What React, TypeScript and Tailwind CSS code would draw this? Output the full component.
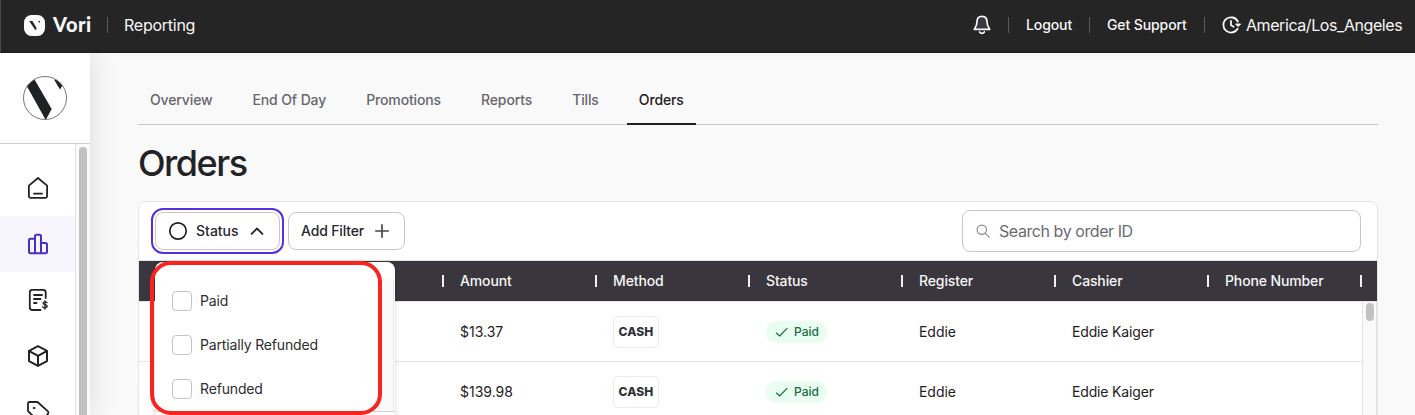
import { ReactNode } from "react";
import { clsx } from "clsx";

const tabs = ["Overview", "End Of Day", "Promotions", "Reports", "Tills", "Orders"];

const columns = ["Order ID", "Date", "Amount", "Method", "Status", "Register", "Cashier", "Phone Number"];

const orders = [
  { id: 1, amount: "$13.37", register: "Eddie", cashier: "Eddie Kaiger" },
  { id: 2, amount: "$139.98", register: "Eddie", cashier: "Eddie Kaiger" },
];

const statuses = ["Paid", "Partially Refunded", "Refunded"];

function Icon({ size = 24, width = 1.8, className, children }: { size?: number; width?: number; className?: string; children: ReactNode }) {
  return (
    <svg
      width={size}
      height={size}
      viewBox="0 0 24 24"
      fill="none"
      stroke="currentColor"
      strokeWidth={width}
      strokeLinecap="round"
      strokeLinejoin="round"
      className={clsx("shrink-0", className)}
    >
      {children}
    </svg>
  );
}

function Divider({ className }: { className?: string }) {
  return <div className={clsx("h-4 w-px shrink-0 bg-[#5a5a5c]", className)} />;
}

function Header() {
  return (
    <header className="relative z-20 flex h-[53px] shrink-0 items-center border-b border-l border-b-[#1b1b1b] border-l-[#4b4b4b] bg-[#252525] pl-[23px] pr-[13px] pb-[2px] text-[#f7f7f7]">
      <svg width="21" height="21" viewBox="0 0 21 21" className="shrink-0">
        <rect width="21" height="21" rx="7.5" fill="#fafafa" />
        <path d="M5.200 6h3.200l4.300 7.200-1.300 2.100z" fill="#252525" />
        <path d="M14 6h2.200l-.6 1.900z" fill="#252525" />
      </svg>
      <span className="ml-2 w-[38px] pb-[2px] font-['Lato'] text-[20px] font-black leading-6 tracking-[0.5px]">Vori</span>
      <Divider className="ml-4" />
      <span className="ml-4 text-[16px] tracking-[-0.25px]">Reporting</span>

      <div className="ml-auto flex items-center">
        <svg width="18" height="20" viewBox="0 0 18 20" fill="none" stroke="currentColor" strokeWidth="1.7" strokeLinecap="round" strokeLinejoin="round" className="mr-[17px]">
          <path d="M9 1.400c-3.200 0-5 2.300-5 5.200 0 4-1.600 5.700-2.700 7.700h15.400C15.600 12.300 14 10.600 14 6.600c0-2.900-1.800-5.200-5-5.200z" fill="#3a3940" />
          <path d="M6.600 17c.6 1 1.400 1.400 2.400 1.400s1.800-.4 2.400-1.400" />
        </svg>
        <Divider />
        <span className="ml-[17px] w-[46px] pb-px text-[14px] font-medium tracking-[-0.1px]">Logout</span>
        <Divider className="ml-[17px]" />
        <span className="ml-[17px] w-[81px] whitespace-nowrap pb-px text-[14px] font-medium tracking-[-0.1px]">Get Support</span>
        <Divider className="ml-[16px]" />
        <svg width="20" height="18" viewBox="0 0 20 18" fill="none" stroke="currentColor" strokeWidth="1.8" strokeLinecap="round" strokeLinejoin="round" className="ml-[17px]">
          <path d="M15.800 5.500A7.600 7.600 0 1 0 15.600 12.700" />
          <path d="M9 5v4.300l2.600 1.500" />
          <path d="M14 8h4.600l-2.300 2.400z" fill="currentColor" strokeWidth="1" />
        </svg>
        <span className="ml-1 w-[156px] whitespace-nowrap text-[16px] tracking-[-0.42px]">America/Los_Angeles</span>
      </div>
    </header>
  );
}

function Sidebar() {
  const item = "flex h-14 w-full shrink-0 items-center justify-center";
  return (
    <aside className="z-10 flex w-[90px] shrink-0 flex-col bg-white shadow-[0_0_26px_rgba(0,0,0,0.13)]">
      <div className="flex h-[91px] shrink-0 items-center justify-center border-b border-[#cfcfcf]">
        <svg width="44" height="44" viewBox="0 0 44 44">
          <clipPath id="avatar">
            <circle cx="22" cy="22" r="21.500" />
          </clipPath>
          <g clipPath="url(#avatar)" fill="#1f2223">
            <path d="M3.500 9.500 11.500 3.500 28.700 33 22.700 44z" />
            <path d="M31 3.500h12l-6 10z" />
          </g>
          <circle cx="22" cy="22" r="21.500" fill="none" stroke="#777" />
        </svg>
      </div>
      <div className="flex min-h-0 flex-1">
        <nav className="flex w-[75px] flex-col overflow-hidden pt-4 text-[#232327]">
          <a className={item}>
            <Icon>
              <path d="M2.900 9.600 12 2l9.100 7.600V20a1.800 1.800 0 0 1-1.800 1.800H4.700A1.800 1.800 0 0 1 2.900 20z" />
              <path d="M8 17.700h8" />
            </Icon>
          </a>
          <a className={clsx(item, "bg-[#f7f6fe] text-[#4a2fc4]")}>
            <Icon width={2}>
              <path d="M9 21.200V4.300a1.500 1.500 0 0 1 1.500-1.500h3a1.500 1.500 0 0 1 1.500 1.500v16.900" />
              <path d="M9 6.700H4.500A1.500 1.500 0 0 0 3 8.200v11.500a1.500 1.500 0 0 0 1.500 1.500h15a1.500 1.500 0 0 0 1.500-1.500v-7.200a1.500 1.500 0 0 0-1.500-1.500H15" />
            </Icon>
          </a>
          <a className={item}>
            <Icon>
              <path d="M14.500 22H6.300a2.500 2.500 0 0 1-2.500-2.500V4.300a2.500 2.500 0 0 1 2.500-2.500h10.900a2.500 2.500 0 0 1 2.500 2.500V10" />
              <path d="M8 7h8M8 11h6.500M8 15h2.500" />
              <path d="M21 14.600c-.8-1.100-4-1-4 .7 0 1.900 4.200 1 4.200 3 0 1.800-3.500 1.900-4.500.5M19 12.700v8.500" strokeWidth="1.300" />
            </Icon>
          </a>
          <a className={item}>
            <Icon width={2}>
              <path d="m12 2.200 9 4.700v10.200l-9 4.700-9-4.700V6.900z" />
              <path d="m3.300 7.200 8.700 4.700 8.700-4.700M12 12v9.500" />
            </Icon>
          </a>
          <a className={item}>
            <Icon>
              <path d="M2 3.500A1.500 1.500 0 0 1 3.500 2h8l10.200 9.200a2 2 0 0 1 .1 2.900l-7 7a2 2 0 0 1-2.900-.1L2 11z" />
              <circle cx="8" cy="8" r=".8" fill="currentColor" strokeWidth="1" />
            </Icon>
          </a>
        </nav>
        <div className="w-[15px] border-l border-[#e3e3e3] bg-[#fafafa] pl-[3px] pt-[3px]">
          <div className="h-80 w-2 rounded-full bg-[#c1c1c1]" />
        </div>
      </div>
    </aside>
  );
}

function StatusMenu() {
  return (
    <div className="absolute left-4 top-[60px] h-[180px] w-[240px] rounded-lg bg-white shadow-[0_1px_5px_rgba(0,0,0,0.18)]">
      <div className="mt-[17px] flex h-[133px] border-b border-[#d6d6d6]">
        <div className="flex flex-1 flex-col gap-6 pl-[17px] pt-3">
          {statuses.map((status) => (
            <label key={status} className="flex h-5 items-center gap-2 text-[14px] tracking-[-0.16px] text-[#2d2d31]">
              <span className="size-5 rounded border border-[#c4c4c7] bg-white" />
              <span className="pb-[2px]">{status}</span>
            </label>
          ))}
        </div>
        <div className="mr-px w-[15px] border-l border-r border-[#e7e7e7] bg-[#fafafa]" />
      </div>
      {/* Highlight around the options */}
      <div className="absolute -left-[5px] -top-px h-[154px] w-[232px] rounded-[21px] border-4 border-[#fb231e]" />
    </div>
  );
}

function Toolbar() {
  const button = "flex h-[38px] items-center rounded-lg border border-[#c8c8cb] bg-white text-[14px] font-medium text-[#28282c]";
  return (
    <div className="flex h-[59px] items-center border-b border-[#e4e4ea] px-4">
      <button className={clsx(button, "w-[125px] pl-3 outline-2 outline-offset-2 outline-[#5430e0]")}>
        <svg width="20" height="20" viewBox="0 0 20 20" className="shrink-0">
          <circle cx="10" cy="10" r="8.200" fill="none" stroke="#1f2023" strokeWidth="1.700" />
        </svg>
        <span className="ml-2 w-[43px] pb-[2px] text-left">Status</span>
        <Icon size={20} width={2.2} className="ml-2">
          <path d="m5.500 15.500 6.500-6.500 6.500 6.500" />
        </Icon>
      </button>
      <button className={clsx(button, "ml-2 w-[117px] pl-3")}>
        <span className="w-[63px] whitespace-nowrap pb-[2px] text-left tracking-[-0.15px]">Add Filter</span>
        <Icon size={20} width={2} className="ml-2 text-[#46454c]">
          <path d="M4.500 12h15M12 4.500v15" />
        </Icon>
      </button>
      <label className="ml-auto flex h-[42px] w-[399px] items-center rounded-lg border border-[#c8c8c8] bg-white pl-[13px] text-[16px] tracking-[-0.43px] text-[#6b6a72]">
        <svg width="14" height="14" viewBox="0 0 15 15" fill="none" stroke="#8b8a92" strokeWidth="1.300" strokeLinecap="round">
          <circle cx="6.200" cy="6.200" r="5" />
          <path d="m10 10 4 4" />
        </svg>
        <span className="ml-[9px]">Search by order ID</span>
      </label>
    </div>
  );
}

function OrdersTable() {
  return (
    <div className="flex flex-col">
      <div className="flex h-10 bg-[#39373d]">
        {columns.map((column, i) => (
          <div
            key={column}
            className={clsx(
              "flex shrink-0 items-center justify-between pl-4 text-[14px] font-medium tracking-[-0.13px] text-[#f6f6f7]",
              i === 0 ? "w-[152px]" : "w-[153px]"
            )}
          >
            <span className="pb-[2px]">{column}</span>
            <span className="h-3 w-[2px] bg-[#f2f2f4]" />
          </div>
        ))}
      </div>
      <div className="flex h-[130px] border-t border-[#e4e4ea]">
        <div className="w-[1223px]">
          {orders.map((order) => (
            <div key={order.id} className="flex h-[60px] items-center border-b border-[#e4e4ea] text-[14px] tracking-[-0.16px] text-[#1f2023]">
              <div className="w-[305px]" />
              <div className="w-[153px] pl-4 tracking-normal">{order.amount}</div>
              <div className="w-[153px] pl-4">
                <div className="flex h-8 w-[46px] items-center justify-center rounded border border-[#ececee] pt-px text-[12px] font-extrabold tracking-[0.1px] text-[#323138]">
                  CASH
                </div>
              </div>
              <div className="w-[153px] pl-4">
                <div className="flex h-[22px] w-[61px] items-center rounded-full bg-[#e9fdf1] pl-2 text-[12px] font-medium tracking-normal text-[#186b43]">
                  <Icon size={16} width={1.7} className="mr-1">
                    <path d="m3.500 13.500 5 4.500 11-11.500" />
                  </Icon>
                  Paid
                </div>
              </div>
              <div className="w-[153px] pl-4 tracking-[-0.05px]">{order.register}</div>
              <div className="w-[153px] pl-4">{order.cashier}</div>
            </div>
          ))}
        </div>
        <div className="flex-1 border-l border-r border-[#e4e4e4] bg-[#fafafa] pl-[3px] pt-px">
          <div className="h-[18px] w-2 rounded-full bg-[#c1c1c1]" />
        </div>
      </div>
    </div>
  );
}

export default function App() {
  return (
    <div className="flex h-[415px] w-[1415px] flex-col overflow-hidden bg-[#f9f9f9] font-['Inter',sans-serif]">
      <Header />
      <div className="flex min-h-0 flex-1">
        <Sidebar />
        <main className="ml-12 w-[1240px] shrink-0">
          <div className="flex h-[72px] items-stretch gap-4 border-b border-[#c6c6c6] text-[14px] font-medium tracking-[-0.13px] text-[#67666e]">
            {tabs.map((tab) => (
              <a
                key={tab}
                className={clsx("-mb-px px-3 pt-[36px]", tab === "Orders" && "border-b-2 border-[#1f2023] text-[#1f2023]")}
              >
                {tab}
              </a>
            ))}
          </div>
          <h1 className="mt-[13px] h-[63px] text-[36px] font-medium leading-[50px] tracking-[-1.5px] text-[#232327]">Orders</h1>
          <section className="relative h-[230px] rounded-t-lg border border-[#e4e4ea] bg-white">
            <Toolbar />
            <OrdersTable />
            <StatusMenu />
          </section>
        </main>
      </div>
    </div>
  );
}
